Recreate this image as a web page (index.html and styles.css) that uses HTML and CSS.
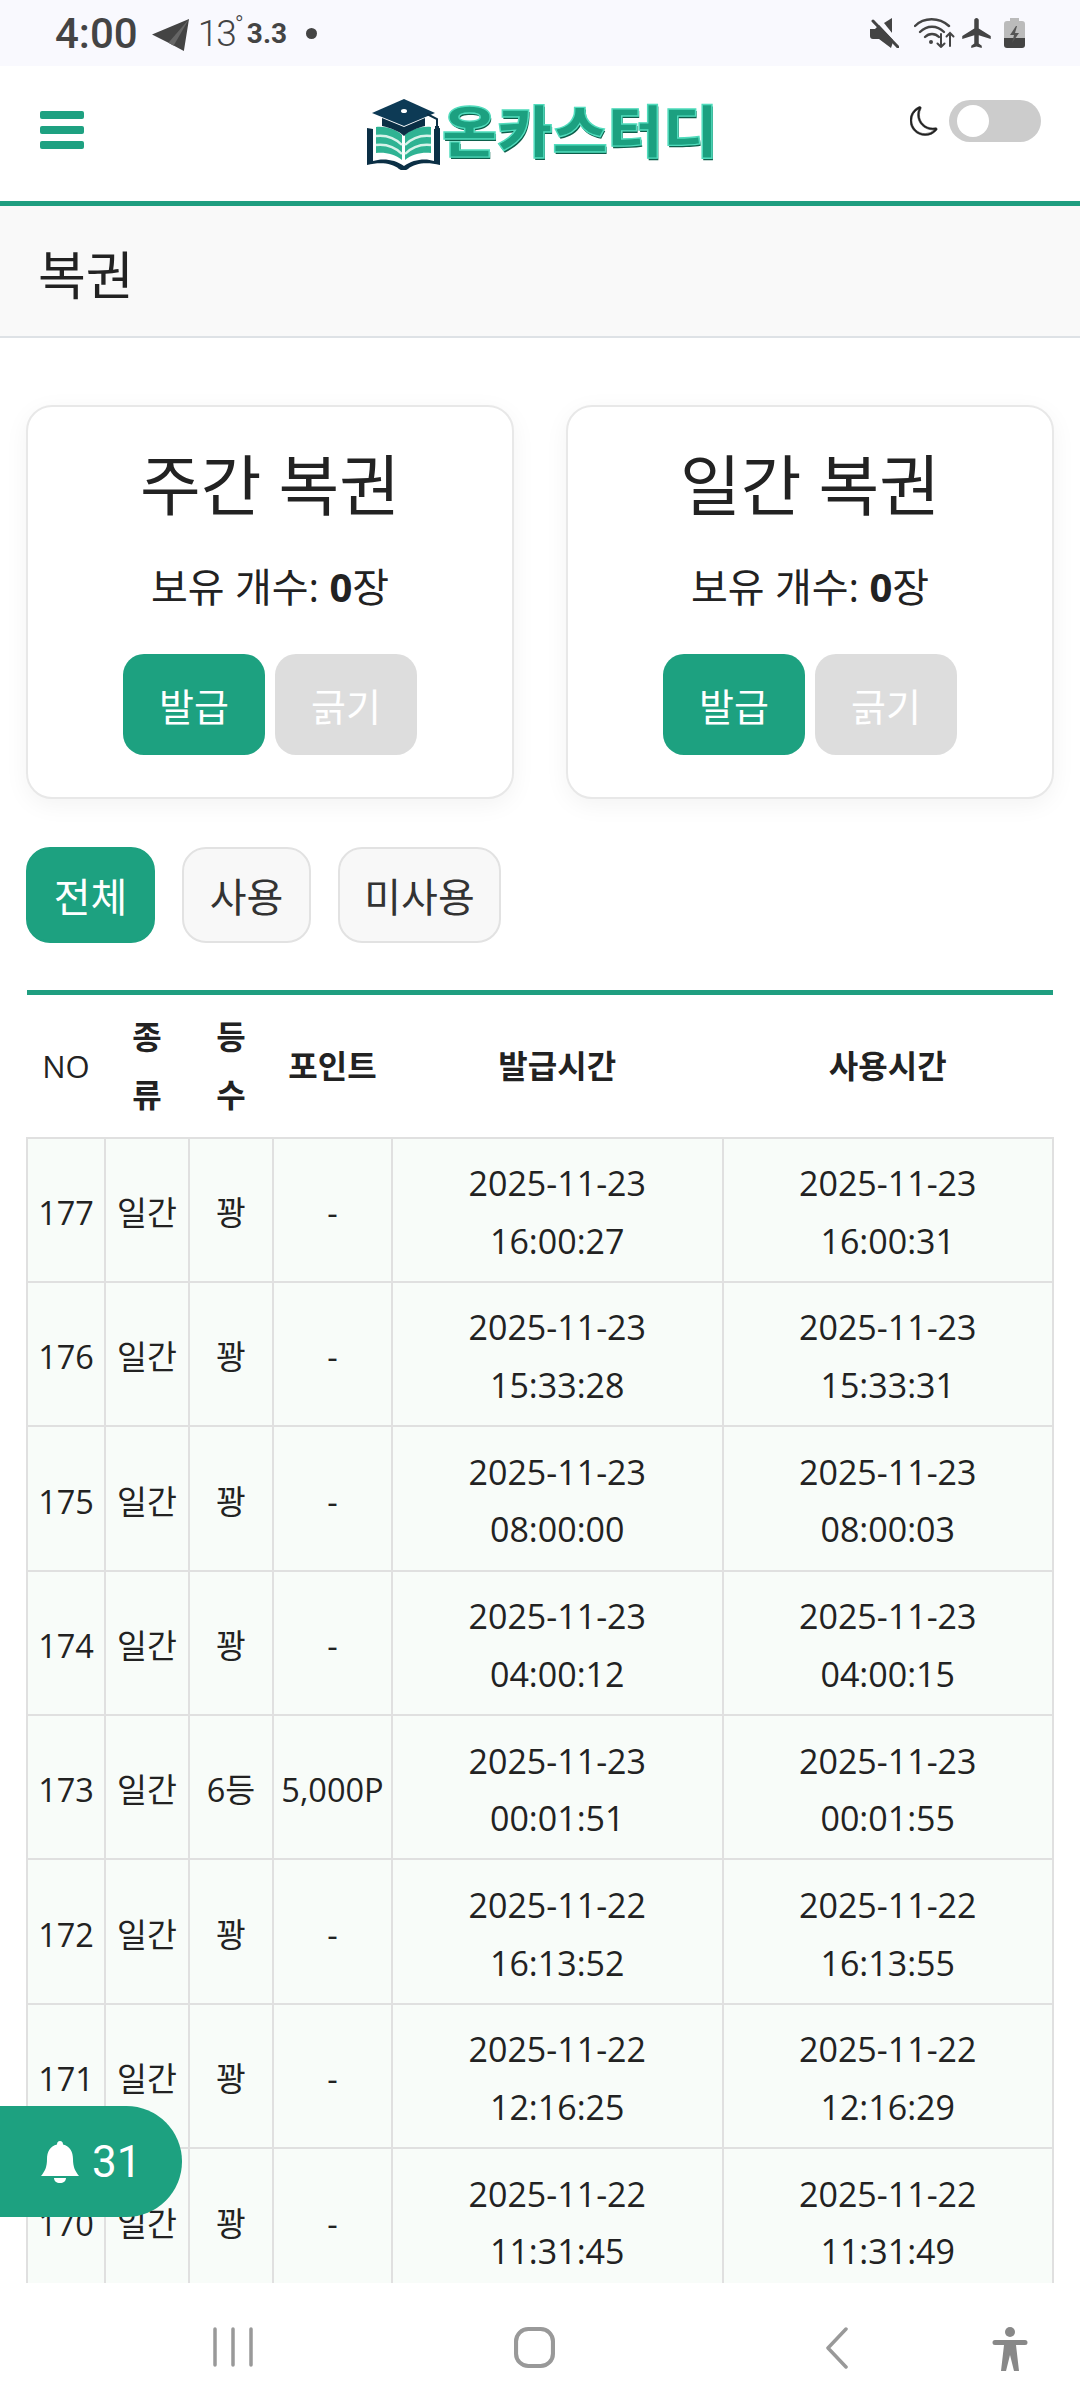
FILE: index.html
```html
<!DOCTYPE html>
<html lang="ko">
<head>
    <meta charset="utf-8">
    <title>복권</title>
    <link rel="stylesheet" href="styles.css">
</head>
<body>
<div class="phone">
    <div class="status-bar">
        <div class="status-left">
            <span class="status-time">4:00</span>
            <svg class="ic-send" viewBox="0 0 36 31"><path fill="#444" d="M0 15 36 0 31 31 16 23Z"/><path fill="#666" d="M16 23 36 0 21 26Z"/></svg>
            <span class="status-temp">13<sup>°</sup></span>
            <span class="status-speed">3.3</span>
            <span class="status-dot"></span>
        </div>
        <div class="status-right">
            <svg class="ic-mute" viewBox="0 0 29 30"><path fill="#444" d="M0 11h5l4-4 14 15v2L21 30 9 21H3a3 3 0 0 1-3-3Z"/><path fill="#444" d="M14 5 22 0v15Z"/><path stroke="#f9f9fe" stroke-width="2.5" d="M3 1 28 28" transform="translate(2 -2)"/><path stroke="#444" stroke-width="3" stroke-linecap="round" d="M3 3 28 29"/></svg>
            <svg class="ic-wifi" viewBox="0 0 41 30" fill="none" stroke="#444" stroke-linecap="round"><path stroke-width="2.4" d="M1 8C10-1 25-1 35 8"/><path stroke-width="2.4" d="M6 14C13 7 23 7 30 14"/><path stroke-width="2.4" d="M11 19C15 15 21 15 25 19"/><circle cx="17" cy="24" r="2" fill="#444" stroke="none"/><path stroke-width="2" d="M27 16V29M23.500 25.500 27 29 30.500 25.500"/><path stroke-width="2" d="M36 28V15M32.500 18.500 36 15 39.500 18.500"/></svg>
            <svg class="ic-plane" viewBox="2 2 19 20"><path fill="#444" d="M21 16v-2l-8-5V3.500c0-.83-.67-1.500-1.500-1.500S10 2.670 10 3.500V9l-8 5v2l8-2.500V19l-2 1.500V22l3.500-1 3.500 1v-1.500L13 19v-5.500l8 2.500z"/></svg>
            <svg class="ic-battery" viewBox="0 0 21 30"><path fill="#bbb" d="M6 0h9v3h3a3 3 0 0 1 3 3v14H0V6a3 3 0 0 1 3-3h3Z"/><path fill="#444" d="M0 20h21v7a3 3 0 0 1-3 3H3a3 3 0 0 1-3-3Z"/><path fill="#555" d="M12 8 6 17h4l-2 8 7-10h-4l2-7Z"/></svg>
        </div>
    </div>

    <header class="top-bar">
        <button class="menu-btn"><span></span><span></span><span></span></button>
        <div class="logo">
            <svg class="logo-mark" viewBox="0 0 73 71">
                <path fill="#0b2f45" d="M0 29 6 30V62C15 59 28 60 37 67 46 60 59 59 67 62V30L73 29V66C60 63 48 64 41 70 38 72 35 72 32 70 25 64 13 63 0 66Z"/>
                <path fill="#2fb393" d="M9 28C18 27 29 30 35 36V61C28 55 18 53 9 54Z"/>
                <path fill="#2fb393" d="M64 28C55 27 44 30 38 36V61C45 55 55 53 64 54Z"/>
                <path fill="none" stroke="#d8f3ea" stroke-width="2.400" d="M9 37C18 36 28 39 35 46M9 46C18 45 28 48 35 55M64 37C55 36 45 39 38 46M64 46C55 45 45 48 38 55"/>
                <path fill="#0b2f45" d="M15 19 37 28 58 19V27C50 29 42 32 37 37 32 32 24 29 15 27Z"/>
                <path fill="#0d3a55" d="M37 0 68 14 37 27 5 14Z"/>
                <ellipse cx="37" cy="12" rx="3" ry="2" fill="#fff"/>
                <path fill="none" stroke="#0b2f45" stroke-width="2" d="M60 15 70 20V28"/>
                <rect x="68" y="27" width="4" height="7" fill="#0b2f45"/>
            </svg>
            <span class="logo-text">온카스터디</span>
        </div>
        <div class="theme-switch">
            <svg class="ic-moon" viewBox="0 0 16 16"><path fill="#222" stroke="#222" stroke-width="0.3" fill-rule="evenodd" d="M6 .278a.768.768 0 0 1 .08.858 7.208 7.208 0 0 0-.878 3.460c0 4.021 3.278 7.277 7.318 7.277.527 0 1.040-.055 1.533-.16a.787.787 0 0 1 .81.316.733.733 0 0 1-.031.893A8.349 8.349 0 0 1 8.344 16C3.734 16 0 12.286 0 7.710 0 4.266 2.114 1.312 5.124.06A.752.752 0 0 1 6 .278zM4.858 1.311A7.269 7.269 0 0 0 1.025 7.710c0 4.020 3.279 7.276 7.319 7.276a7.316 7.316 0 0 0 5.205-2.162c-.337.042-.68.063-1.029.063-4.610 0-8.343-3.714-8.343-8.290 0-1.167.242-2.278.681-3.286z"/></svg>
            <span class="toggle"><span class="knob"></span></span>
        </div>
    </header>

    <div class="page-title">복권</div>

    <main class="content">
        <section class="cards">
            <div class="card">
                <h2>주간 복권</h2>
                <p>보유 개수: <b>0</b>장</p>
                <div class="card-btns">
                    <button class="btn btn-on">발급</button>
                    <button class="btn btn-off">긁기</button>
                </div>
            </div>
            <div class="card">
                <h2>일간 복권</h2>
                <p>보유 개수: <b>0</b>장</p>
                <div class="card-btns">
                    <button class="btn btn-on">발급</button>
                    <button class="btn btn-off">긁기</button>
                </div>
            </div>
        </section>

        <div class="filters">
            <button class="filter active">전체</button>
            <button class="filter">사용</button>
            <button class="filter">미사용</button>
        </div>

        <table class="lotto">
            <colgroup>
                <col class="c-no"><col class="c-type"><col class="c-rank"><col class="c-point"><col class="c-time"><col class="c-time">
            </colgroup>
            <thead>
                <tr>
                    <th class="th-plain">NO</th>
                    <th>종<br>류</th>
                    <th>등<br>수</th>
                    <th>포인트</th>
                    <th>발급시간</th>
                    <th>사용시간</th>
                </tr>
            </thead>
            <tbody>
                <tr><td>177</td><td>일간</td><td>꽝</td><td>-</td><td class="td-time">2025-11-23<br>16:00:27</td><td class="td-time">2025-11-23<br>16:00:31</td></tr>
                <tr><td>176</td><td>일간</td><td>꽝</td><td>-</td><td class="td-time">2025-11-23<br>15:33:28</td><td class="td-time">2025-11-23<br>15:33:31</td></tr>
                <tr><td>175</td><td>일간</td><td>꽝</td><td>-</td><td class="td-time">2025-11-23<br>08:00:00</td><td class="td-time">2025-11-23<br>08:00:03</td></tr>
                <tr><td>174</td><td>일간</td><td>꽝</td><td>-</td><td class="td-time">2025-11-23<br>04:00:12</td><td class="td-time">2025-11-23<br>04:00:15</td></tr>
                <tr><td>173</td><td>일간</td><td>6등</td><td>5,000P</td><td class="td-time">2025-11-23<br>00:01:51</td><td class="td-time">2025-11-23<br>00:01:55</td></tr>
                <tr><td>172</td><td>일간</td><td>꽝</td><td>-</td><td class="td-time">2025-11-22<br>16:13:52</td><td class="td-time">2025-11-22<br>16:13:55</td></tr>
                <tr><td>171</td><td>일간</td><td>꽝</td><td>-</td><td class="td-time">2025-11-22<br>12:16:25</td><td class="td-time">2025-11-22<br>12:16:29</td></tr>
                <tr><td>170</td><td>일간</td><td>꽝</td><td>-</td><td class="td-time">2025-11-22<br>11:31:45</td><td class="td-time">2025-11-22<br>11:31:49</td></tr>
            </tbody>
        </table>

        <div class="notice-pill">
            <svg class="ic-bell" viewBox="0 0 38 42"><path fill="#fff" d="M19 0c2 0 3 1.500 3 3.500C29 5 32 11 32 18c0 8 2 12 6 17H0c4-5 6-9 6-17C6 11 9 5 16 3.500 16 1.500 17 0 19 0ZM13 37h12c0 3-2.500 5-6 5s-6-2-6-5Z"/></svg>
            <span>31</span>
        </div>
    </main>

    <nav class="nav-bar">
        <svg class="ic-recent" viewBox="0 0 40 40"><path stroke="#999" stroke-width="3.500" stroke-linecap="round" d="M2 2V38M20 2V38M38 2V38"/></svg>
        <svg class="ic-home" viewBox="0 0 40 40"><rect x="2" y="2" width="36" height="36" rx="12" fill="none" stroke="#999" stroke-width="4"/></svg>
        <svg class="ic-back" viewBox="0 0 23 42"><path fill="none" stroke="#999" stroke-width="3.500" stroke-linecap="round" stroke-linejoin="round" d="M21 2 3 21 21 40"/></svg>
        <svg class="ic-access" viewBox="0 0 36 44"><circle cx="18" cy="5" r="5" fill="#888"/><path fill="#888" d="M3 13H33a2.500 2.500 0 0 1 0 5H24L27 44H22L18 28 14 44H9L12 18H3a2.500 2.500 0 0 1 0-5Z"/></svg>
    </nav>
</div>
</body>
</html>
```

FILE: styles.css
```css
* {
    box-sizing: border-box;
}

body {
    margin: 0;
    font-family: "Open Sans", "Noto Sans CJK KR", sans-serif;
    color: #222;
    background-color: #fff;
}

button {
    font-family: inherit;
    padding: 0;
    border: 0;
}

.phone {
    width: 1080px;
    height: 2408px;
    display: flex;
    flex-direction: column;
    overflow: hidden;
}

/* status bar */
.status-bar {
    height: 66px;
    flex: none;
    display: flex;
    justify-content: space-between;
    background: #f9f9fe;
    color: #444;
    padding: 0 55px 0 55px;
}

.status-left,
.status-right {
    display: flex;
    align-items: center;
}

.status-time {
    font: 500 42px Roboto, sans-serif;
}

.ic-send {
    width: 37px;
    height: 32px;
    margin: 4px 0 0 14px;
}

.status-temp {
    font: 300 37px Roboto, sans-serif;
    margin-left: 9px;
    letter-spacing: -2px;
}

.status-temp sup {
    font-size: 24px;
    line-height: 0;
}

.status-speed {
    font: 700 28px Roboto, sans-serif;
    margin-left: 5px;
}

.status-dot {
    width: 11px;
    height: 11px;
    margin-left: 19px;
    border-radius: 50%;
    background: #444;
}

.ic-mute {
    width: 29px;
    height: 30px;
}

.ic-wifi {
    width: 41px;
    height: 30px;
    margin-left: 15px;
}

.ic-plane {
    width: 31px;
    height: 30px;
    margin-left: 6px;
}

.ic-battery {
    width: 21px;
    height: 30px;
    margin-left: 12px;
}

/* header */
.top-bar {
    height: 140px;
    flex: none;
    position: relative;
    display: flex;
    align-items: flex-start;
    justify-content: space-between;
    border-bottom: 5px solid #1f9e80;
    padding: 45px 39px 0 40px;
    background: #fff;
}

.menu-btn {
    width: 44px;
    display: flex;
    flex-direction: column;
    gap: 7px;
    background: none;
}

.menu-btn span {
    height: 8px;
    border-radius: 2px;
    background: #1ea181;
}

.logo {
    position: absolute;
    left: 367px;
    top: 33px;
    display: flex;
    align-items: flex-start;
}

.logo-mark {
    width: 73px;
    height: 71px;
    flex: none;
}

.logo-text {
    margin: -3px 0 0 2px;
    font-family: "Noto Sans CJK KR", sans-serif;
    font-weight: 900;
    font-size: 60px;
    line-height: 70px;
    letter-spacing: 0;
    color: #1ca080;
    -webkit-text-stroke: 1.500px #52dcbd;
    text-shadow: 1px 2px 0 #0d5f4b;
    white-space: nowrap;
    transform: scaleY(0.92);
    transform-origin: top;
}

.theme-switch {
    display: flex;
    align-items: center;
    gap: 10px;
    margin-top: -11px;
}

.ic-moon {
    width: 29px;
    height: 30px;
}

.toggle {
    width: 92px;
    height: 42px;
    padding: 5px 8px;
    border-radius: 21px;
    background: #ccc;
}

.knob {
    display: block;
    width: 32px;
    height: 32px;
    border-radius: 50%;
    background: #fff;
}

/* title */
.page-title {
    height: 132px;
    flex: none;
    padding-left: 38px;
    font-size: 52px;
    line-height: 138px;
    background: #f9f9f9;
    border-bottom: 2px solid #dee2e6;
}

.content {
    flex: 1;
    min-height: 0;
    overflow: hidden;
    position: relative;
    padding: 67px 26px 0 26px;
}

/* lottery cards */
.cards {
    display: grid;
    grid-template-columns: 488px 488px;
    gap: 52px;
}

.card {
    height: 394px;
    padding-top: 32px;
    border: 2px solid #e8e8e8;
    border-radius: 26px;
    background: #fff;
    box-shadow: 0 6px 24px rgba(0, 0, 0, 0.05);
    text-align: center;
}

.card h2 {
    margin: 0;
    font-size: 66px;
    font-weight: 400;
    line-height: 90px;
}

.card p {
    margin: 30px 0 0 0;
    font-size: 40px;
    line-height: 56px;
}

.card-btns {
    display: flex;
    justify-content: center;
    gap: 10px;
    margin-top: 39px;
}

.btn {
    width: 142px;
    height: 101px;
    border-radius: 21px;
    color: #fff;
    font-size: 38px;
}

.btn-on {
    background: #1da180;
}

.btn-off {
    background: #ddd;
}

/* filters */
.filters {
    display: flex;
    gap: 27px;
    margin-top: 48px;
}

.filter {
    width: 129px;
    height: 96px;
    border: 2px solid #e2e2e2;
    border-radius: 24px;
    background: #f8f8f8;
    color: #333;
    font-size: 40px;
}

.filter:last-child {
    width: 163px;
}

.filter.active {
    background: #1da180;
    border-color: #1da180;
    color: #fff;
}

/* table */
.lotto {
    width: 1026px;
    margin-top: 47px;
    border-collapse: collapse;
    table-layout: fixed;
    border-top: 5px solid #1f9e80;
    font-size: 32.500px;
}

.c-no {
    width: 78px;
}

.c-type,
.c-rank {
    width: 84px;
}

.c-point {
    width: 119px;
}

.c-time {
    width: 330.500px;
}

.lotto th {
    height: 145px;
    padding: 0;
    font-size: 32px;
    line-height: 58px;
    font-weight: 700;
}

.lotto th.th-plain {
    font-size: 31px;
    font-weight: 400;
}

.lotto td {
    padding: 16.600px 0 10.600px;
    border: 2px solid #e0e0e0;
    background: #f8fcf9;
    text-align: center;
    line-height: 57.600px;
    white-space: nowrap;
}

.lotto td.td-time {
    font-size: 34px;
}

/* floating notice */
.notice-pill {
    position: absolute;
    left: 0;
    top: 1768px;
    width: 182px;
    height: 111px;
    display: flex;
    align-items: center;
    gap: 13px;
    padding-left: 41px;
    border-radius: 0 56px 56px 0;
    background: #1da180;
    color: #fff;
    font-family: Roboto, sans-serif;
    font-size: 44px;
}

.ic-bell {
    width: 38px;
    height: 42px;
}

/* android nav */
.nav-bar {
    height: 125px;
    flex: none;
    position: relative;
    background: #fff;
}

.nav-bar svg {
    position: absolute;
}

.ic-recent {
    left: 213px;
    top: 44px;
    width: 40px;
    height: 40px;
}

.ic-home {
    left: 514px;
    top: 44px;
    width: 41px;
    height: 41px;
}

.ic-back {
    left: 825px;
    top: 44px;
    width: 23px;
    height: 42px;
}

.ic-access {
    left: 992px;
    top: 44px;
    width: 36px;
    height: 44px;
}
```
